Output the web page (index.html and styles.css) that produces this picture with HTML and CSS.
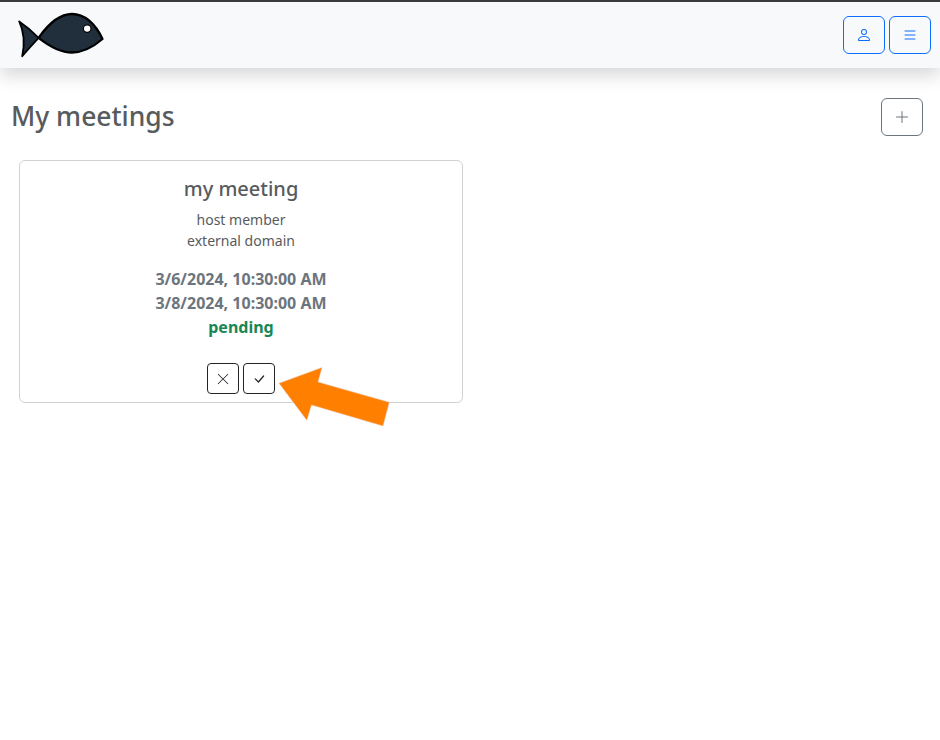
FILE: index.html
```html
<!DOCTYPE html>
<html lang="en">
<head>
<meta charset="utf-8">
<title>My meetings</title>
<link rel="stylesheet" href="styles.css">
</head>
<body>
<nav class="navbar">
  <svg class="logo" width="92" height="52" viewBox="15 9 92 52">
    <path class="tail" d="M19.2 21.4 C26 26 33 32 38.6 37.8 C33 44 28 49 22.2 56.2 C24.8 44 24.2 32 19.2 21.4Z"/>
    <path d="M38.6 37.8 C49 23 60 14 72 14 C84 14 95 23 102.5 39 C92 48 82 52.5 72 52.5 C60 52.5 49 46 38.6 37.8Z"/>
    <circle cx="87.2" cy="28.6" r="3.8"/>
  </svg>
  <div class="nav-buttons">
    <button class="btn btn-primary" aria-label="Profile"><svg class="icon" viewBox="0 0 16 16"><path d="M8 8a3 3 0 1 0 0-6 3 3 0 0 0 0 6m2-3a2 2 0 1 1-4 0 2 2 0 0 1 4 0m4 8c0 1-1 1-1 1H3s-1 0-1-1 1-4 6-4 6 3 6 4m-1-.004c-.001-.246-.154-.986-.832-1.664C11.516 10.68 10.289 10 8 10s-3.516.68-4.168 1.332c-.678.678-.83 1.418-.832 1.664z"/></svg></button>
    <button class="btn btn-primary" aria-label="Menu"><svg class="icon" viewBox="0 0 16 16"><path d="M2.5 12a.5.5 0 0 1 .5-.5h10a.5.5 0 0 1 0 1H3a.5.5 0 0 1-.5-.5m0-4a.5.5 0 0 1 .5-.5h10a.5.5 0 0 1 0 1H3a.5.5 0 0 1-.5-.5m0-4a.5.5 0 0 1 .5-.5h10a.5.5 0 0 1 0 1H3a.5.5 0 0 1-.5-.5"/></svg></button>
  </div>
</nav>
<main>
  <header class="page-head">
    <h1>My meetings</h1>
    <button class="btn btn-secondary" aria-label="Add"><svg class="icon" viewBox="0 0 16 16"><path d="M8 2a.5.5 0 0 1 .5.5v5h5a.5.5 0 0 1 0 1h-5v5a.5.5 0 0 1-1 0v-5h-5a.5.5 0 0 1 0-1h5v-5A.5.5 0 0 1 8 2"/></svg></button>
  </header>
  <section class="card">
    <h2>my meeting</h2>
    <div class="info">host member</div>
    <div class="info">external domain</div>
    <div class="schedule">
      <div>3/6/2024, 10:30:00 AM</div>
      <div>3/8/2024, 10:30:00 AM</div>
      <div class="status">pending</div>
    </div>
    <div class="actions">
      <button class="btn btn-dark" aria-label="Reject"><svg class="icon" viewBox="0 0 16 16"><path d="M2.146 2.854a.5.5 0 1 1 .708-.708L8 7.293l5.146-5.147a.5.5 0 0 1 .708.708L8.707 8l5.147 5.146a.5.5 0 0 1-.708.708L8 8.707l-5.146 5.147a.5.5 0 0 1-.708-.708L7.293 8z"/></svg></button>
      <button class="btn btn-dark" aria-label="Accept"><svg class="icon" viewBox="0 0 16 16"><path d="M12.736 3.97a.733.733 0 0 1 1.047 0c.286.289.29.756.01 1.05L7.88 12.01a.733.733 0 0 1-1.065.02L3.217 8.384a.757.757 0 0 1 0-1.06.733.733 0 0 1 1.047 0l3.052 3.093 5.4-6.425z"/></svg></button>
    </div>
    <svg class="arrow" width="114" height="62" viewBox="277 366 114 62"><path d="M279 383.3 L322 367.5 L318 382 L389.3 402.3 L383 426 L311.5 405 L306.8 420.3Z"/></svg>
  </section>
</main>
</body>
</html>
```
FILE: styles.css
```css
* { box-sizing: border-box; }
body {
  margin: 0;
  min-height: 100vh;
  background: #fff;
  color: #585b5e;
  font-family: "Noto Sans", sans-serif;
  font-size: 16px;
  line-height: 1.5;
}
h1, h2 { margin: 0; font-weight: 500; line-height: 1.2; }
.navbar {
  display: flex;
  justify-content: space-between;
  align-items: center;
  height: 68px;
  padding: 0 9px 0 15px;
  border-top: 2px solid #3b3b3f;
  background: #f8f9fa;
  box-shadow: 0 8px 16px rgba(0, 0, 0, .15);
}
.logo { fill: #212f3d; stroke: #000; stroke-width: 2.3; stroke-linejoin: round; }
.logo .tail { stroke-width: 1.8; }
.logo circle { fill: #fff; stroke-width: 1.2; }
.nav-buttons { display: flex; gap: 4px; }
.btn {
  display: flex;
  align-items: center;
  justify-content: center;
  width: 42px;
  height: 38px;
  padding: 0;
  border: 1px solid;
  border-radius: 6px;
  background: transparent;
  font-size: 16px;
}
.icon { width: 1em; height: 1em; fill: currentColor; }
.btn-primary { color: #0d6efd; }
.btn-secondary { color: #6c757d; }
.btn-dark { width: 32px; height: 31px; border-radius: 4px; color: #212529; font-size: 14px; }
.page-head {
  display: flex;
  justify-content: space-between;
  align-items: center;
  padding: 30px 17px 0 11px;
}
.page-head h1 { font-size: calc(1.3rem + .6vw); }
.card {
  position: relative;
  width: 444px;
  height: 243px;
  margin: 24px 0 0 19px;
  padding-top: 16px;
  border: 1px solid #d0d1d2;
  border-radius: 6px;
  text-align: center;
}
.card h2 { margin-bottom: 8px; font-size: 20px; }
.info { font-size: 14px; }
.schedule { margin-top: 16px; color: #6c757d; font-weight: 700; }
.status { color: #198754; }
.actions { display: flex; justify-content: center; gap: 4px; margin-top: 24px; }
.arrow { position: absolute; left: 257px; top: 205px; fill: #ff8000; stroke: #e9c9bd; stroke-width: .5; }
```
